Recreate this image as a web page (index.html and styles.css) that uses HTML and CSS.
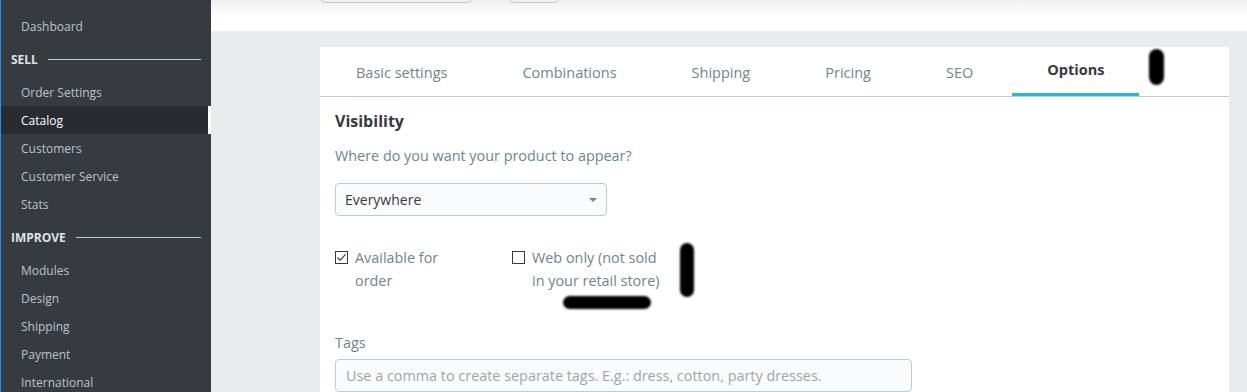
FILE: index.html
```html
<!DOCTYPE html>
<html lang="en">
<head>
  <meta charset="UTF-8" />
  <title>Product - Options</title>
  <link rel="stylesheet" href="styles.css">
</head>
<body>

<!-- Sidebar -->
<nav class="sidebar">
  <a class="nav-link" href="#">Dashboard</a>
  <div class="nav-title">Sell</div>
  <a class="nav-link" href="#">Order Settings</a>
  <a class="nav-link active" href="#">Catalog</a>
  <a class="nav-link" href="#">Customers</a>
  <a class="nav-link" href="#">Customer Service</a>
  <a class="nav-link" href="#">Stats</a>
  <div class="nav-title">Improve</div>
  <a class="nav-link" href="#">Modules</a>
  <a class="nav-link" href="#">Design</a>
  <a class="nav-link" href="#">Shipping</a>
  <a class="nav-link" href="#">Payment</a>
  <a class="nav-link" href="#">International</a>
</nav>

<!-- Main -->
<div class="main">
  <header class="header">
    <div class="toolbar">
      <div class="fake-input wide"></div>
      <div class="fake-input small"></div>
      <div class="header-links">
        <a href="#">Sales</a>
        <a href="#">Product list</a>
        <a href="#">Help</a>
      </div>
    </div>
  </header>

  <div class="page">
    <div class="card">
      <div class="tabs">
        <a class="tab" href="#">Basic settings</a>
        <a class="tab" href="#">Combinations</a>
        <a class="tab" href="#">Shipping</a>
        <a class="tab" href="#">Pricing</a>
        <a class="tab" href="#">SEO</a>
        <a class="tab active" href="#">Options</a>
      </div>

      <div class="card-body">
        <h3>Visibility</h3>
        <p class="hint">Where do you want your product to appear?</p>

        <div class="select">
          <span>Everywhere</span>
          <span class="caret"></span>
        </div>

        <div class="checks">
          <label class="check col-1">
            <span class="box">
              <svg viewBox="0 0 13 13" width="13" height="13"><path d="M2.5 6.5 L5.2 9.2 L10.5 3.4" fill="none" stroke="#363a41" stroke-width="1.2"/></svg>
            </span>
            <span class="check-text first">Available for order</span>
          </label>
          <label class="check">
            <span class="box"></span>
            <span class="check-text second">Web only (not sold in your retail store)</span>
          </label>
        </div>

        <div class="field-label">Tags</div>
        <div class="text-input">Use a comma to create separate tags. E.g.: dress, cotton, party dresses.</div>
      </div>

      <!-- marker scribbles over the screenshot -->
      <span class="scribble s1"></span>
      <span class="scribble s2"></span>
      <span class="scribble s3"></span>
    </div>
  </div>
</div>

</body>
</html>
```

FILE: styles.css
```css
* {
  margin: 0;
  padding: 0;
  box-sizing: border-box;
}

body {
  font-family: 'Open Sans', sans-serif;
  font-size: 14.4px;
  background: #eaebec;
  color: #363a41;
  height: 392px;
  overflow: hidden;
  display: flex;
}

a {
  text-decoration: none;
}

/* Sidebar */

.sidebar {
  width: 211px;
  flex-shrink: 0;
  background: #363a41;
  border-left: 1px solid #2e8de0;
  padding-top: 12px;
  display: flex;
  flex-direction: column;
}

.nav-link {
  flex-shrink: 0;
  height: 28px;
  padding: 1px 0 0 20px;
  line-height: 27px;
  font-size: 12px;
  color: #bec3c7;
}

.nav-link.active {
  background: #282b30;
  color: #fff;
  border-right: 3px solid #fff;
}

.nav-title {
  flex-shrink: 0;
  height: 38px;
  padding: 0 10px;
  display: flex;
  align-items: center;
  gap: 10px;
  font-size: 12px;
  font-weight: 700;
  text-transform: uppercase;
  color: #dfe3e6;
}

.nav-title::after {
  content: "";
  flex: 1;
  height: 1px;
  background: #bbcdd2;
}

/* Header */

.main {
  flex: 1;
  display: flex;
  flex-direction: column;
}

.header {
  flex-shrink: 0;
  height: 31px;
  overflow: hidden;
  background: linear-gradient(#efefef, #fff 15px);
}

.toolbar {
  margin-top: -28px;
  height: 31px;
  display: flex;
  align-items: flex-end;
}

.fake-input {
  height: 31px;
  border: 1px solid #bbcdd2;
  border-radius: 4px;
}

.fake-input.wide {
  width: 151px;
  margin-left: 110px;
}

.fake-input.small {
  width: 49px;
  margin-left: 37px;
}

.header-links {
  margin-left: auto;
  margin-right: 22px;
  display: flex;
  gap: 14px;
  font-size: 13px;
  line-height: 28px;
  margin-bottom: -3px;
}

.header-links a {
  color: #6c868e;
}

/* Page */

.page {
  padding: 16px 18px 0 109px;
  flex: 1;
}

.card {
  position: relative;
  background: #fff;
  height: 100%;
}

.tabs {
  display: flex;
  height: 50px;
  border-bottom: 1px solid #bbcdd2;
}

.tab {
  height: 49px;
  display: flex;
  align-items: center;
  padding: 1px 39px 0 36px;
  font-size: 14.5px;
  color: #6c868e;
}

.tab.active {
  color: #363a41;
  font-weight: 700;
  border-bottom: 3px solid #25b9d7;
  padding: 0 35px 2px 35px;
}

.card-body {
  padding: 0 15px;
}

.card-body h3 {
  margin-top: 13px;
  font-size: 16px;
  line-height: 22px;
  font-weight: 700;
}

.hint {
  margin-top: 13px;
  line-height: 22px;
  color: #6c868e;
}

.select {
  margin-top: 16px;
  width: 272px;
  height: 33px;
  border: 1px solid #bbcdd2;
  border-radius: 4px;
  background: #fafbfc;
  display: flex;
  align-items: center;
  justify-content: space-between;
  padding: 0 9px 0 9px;
  font-size: 14px;
}

.caret {
  width: 0;
  height: 0;
  border-left: 4px solid transparent;
  border-right: 4px solid transparent;
  border-top: 4px solid #6c868e;
  margin-top: 1px;
}

.checks {
  margin-top: 30px;
  display: flex;
}

.check {
  display: flex;
  align-items: flex-start;
  gap: 7px;
  line-height: 23px;
  color: #6c868e;
}

.check.col-1 {
  width: 177px;
}

.box {
  width: 13px;
  height: 13px;
  margin-top: 5px;
  border: 1px solid #363a41;
  flex-shrink: 0;
  position: relative;
}

.box svg {
  position: absolute;
  left: -1px;
  top: -1px;
}

.check-text.first {
  width: 112px;
}

.check-text.second {
  width: 134px;
}

.field-label {
  margin-top: 40px;
  line-height: 22px;
  color: #6c868e;
}

.text-input {
  margin-top: 5px;
  width: 577px;
  height: 33px;
  border: 1px solid #bbcdd2;
  border-radius: 4px;
  background: #fafbfc;
  padding: 0 10px;
  line-height: 31px;
  color: #9aa6ac;
}

/* Marker scribbles */

.scribble {
  position: absolute;
  background: #000;
  border-radius: 8px;
  filter: blur(1px);
}

.s1 {
  left: 829px;
  top: 2px;
  width: 15px;
  height: 36px;
}

.s2 {
  left: 360px;
  top: 196px;
  width: 14px;
  height: 54px;
}

.s3 {
  left: 243px;
  top: 249px;
  width: 88px;
  height: 13px;
}
```
